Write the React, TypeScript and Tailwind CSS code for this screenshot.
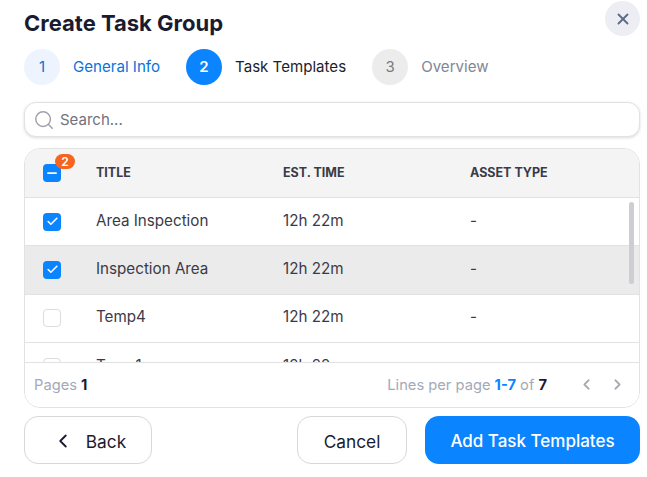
import { Check, ChevronLeft, ChevronRight, Minus, Search, X } from "lucide-react";

const rows = [
  { title: "Area Inspection", checked: true },
  { title: "Inspection Area", checked: true, highlight: true },
  { title: "Temp4", checked: false },
  { title: "Temp1", checked: false },
];

function Box({ checked }: { checked: boolean }) {
  if (checked) {
    return (
      <span className="flex h-[18px] w-[18px] items-center justify-center rounded-[4px] bg-[#0a84ff]">
        <Check size={13} strokeWidth={3} className="text-white" />
      </span>
    );
  }
  return <span className="block h-[18px] w-[18px] rounded-[4px] border border-[#dcdcdc] bg-white" />;
}

function Step({ n, label, state }: { n: number; label: string; state: "done" | "active" | "todo" }) {
  const circle =
    state === "done"
      ? "bg-[#edf4fd] text-[#0b72d9]"
      : state === "active"
        ? "bg-[#0a84ff] text-white font-semibold"
        : "bg-[#ececec] text-[#7a7a80]";
  const text =
    state === "done" ? "text-[#0b72d9]" : state === "active" ? "text-[#1d1d2c]" : "text-[#7f8794]";
  return (
    <div className="flex items-center gap-[13px]">
      <span className={`flex h-9 w-9 items-center justify-center rounded-full text-[15px] ${circle}`}>{n}</span>
      <span className={`text-[15.1px] ${text}`}>{label}</span>
    </div>
  );
}

export default function App() {
  return (
    <div className="relative h-[477px] w-[647px] overflow-hidden bg-white pl-6 pr-[7px] font-['Inter',sans-serif] text-[#1d1d2c]">
      <button className="absolute right-[7px] top-[1px] flex h-[35px] w-[35px] items-center justify-center rounded-full bg-[#edeef3] text-[#5f6b8c]">
        <X size={18} strokeWidth={2.5} />
      </button>

      <h1 className="flex h-[49px] items-center pb-1 text-[22px] font-bold leading-none text-[#1a1a30]">Create Task Group</h1>

      <div className="flex items-center gap-[26px]">
        <Step n={1} label="General Info" state="done" />
        <Step n={2} label="Task Templates" state="active" />
        <Step n={3} label="Overview" state="todo" />
      </div>

      <div className="mt-[17px] flex h-[35px] items-center gap-[5px] rounded-[12px] border border-[#e2e2e2] bg-white pl-[8px] pr-[9px] pt-[1px] shadow-[0_1px_3px_rgba(0,0,0,0.14)]">
        <Search size={22} strokeWidth={1.6} className="text-[#a0a0aa]" />
        <span className="text-[15px] text-[#71717f]">Search...</span>
      </div>

      <div className="relative mt-[11px] overflow-hidden rounded-[16px] border border-[#e2e2e2]">
        <div className="flex h-[49px] items-center border-b border-[#e2e2e2] bg-[#f4f4f4] text-[12.5px] font-bold text-[#3a3a48]">
          <div className="flex w-[71px] pl-[18px]">
            <span className="relative flex h-[18px] w-[18px] items-center justify-center rounded-[4px] bg-[#0a84ff]">
              <Minus size={14} strokeWidth={3} className="text-white" />
              <span className="absolute -top-[10px] left-[12px] flex h-[15px] w-5 items-center justify-center rounded-full bg-[#f5651f] text-[12px] font-semibold leading-none text-white">
                2
              </span>
            </span>
          </div>
          <div className="w-[187px]">TITLE</div>
          <div className="w-[187px]">EST. TIME</div>
          <div>ASSET TYPE</div>
        </div>

        <div className="h-[164px] overflow-hidden">
          {rows.map((r) => (
            <div
              key={r.title}
              className={`flex h-[48.33px] shrink-0 items-center border-b border-[#e2e2e2] text-[15.2px] text-[#3a3a48] ${r.highlight ? "bg-[#ebebeb]" : "bg-white"}`}
            >
              <div className="flex w-[71px] pl-[18px]">
                <Box checked={r.checked} />
              </div>
              <div className="w-[187px] pb-[1px]">{r.title}</div>
              <div className="w-[187px] pb-[1px]">12h 22m</div>
              <div className="pb-[1px]">-</div>
            </div>
          ))}
        </div>

        <div className="absolute right-[5px] top-[53px] h-[82px] w-[5px] rounded-full bg-[#cdcdd2]" />

        <div className="flex h-[45px] items-center justify-between border-t border-[#e2e2e2] bg-white pl-[9px] pr-[13px] text-[14.7px] text-[#a3a9b8]">
          <span>
            Pages <b className="font-bold text-[#1a1a30]">1</b>
          </span>
          <div className="flex items-center">
            <span>
              Lines per page <b className="font-bold text-[#0a84ff]">1-7</b> of{" "}
              <b className="font-bold text-[#1a1a30]">7</b>
            </span>
            <ChevronLeft size={17} strokeWidth={2.5} className="ml-[31px] text-[#a9acb4]" />
            <ChevronRight size={17} strokeWidth={2.5} className="ml-[14px] text-[#a9acb4]" />
          </div>
        </div>
      </div>

      <div className="mt-[8px] flex items-center text-[17.3px]">
        <button className="flex h-[48px] w-[128px] items-center justify-center gap-[12px] rounded-[14px] border border-[#d8d8d8] bg-white pl-[2px] pt-[3px] text-[#1a1a30]">
          <ChevronLeft size={22} strokeWidth={2} className="-mt-[2px]" />
          Back
        </button>
        <button className="ml-auto flex h-[48px] w-[110px] items-center justify-center rounded-[14px] border border-[#d8d8d8] bg-white pt-[3px] text-[#1a1a30]">
          Cancel
        </button>
        <button className="ml-[18px] flex h-[48px] w-[215px] items-center justify-center rounded-[14px] bg-[#0a84ff] pt-[3px] text-[17px] font-medium text-white">
          Add Task Templates
        </button>
      </div>
    </div>
  );
}
